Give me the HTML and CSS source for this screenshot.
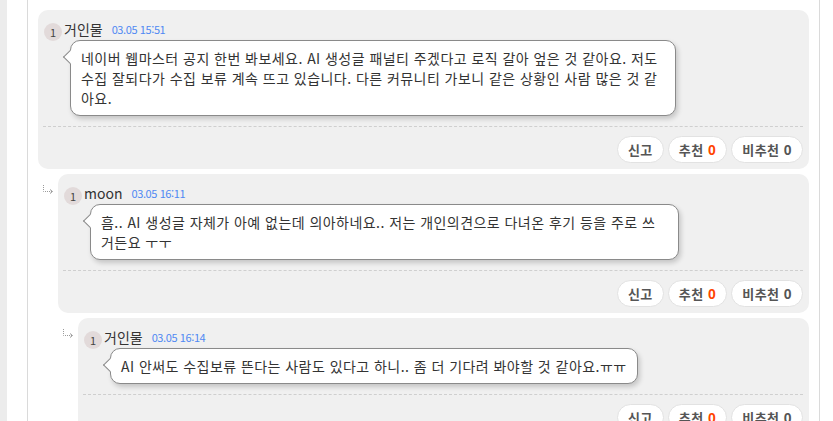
FILE: index.html
```html
<!DOCTYPE html>
<html lang="ko">
<head>
<meta charset="utf-8">
<title>댓글</title>
<link rel="stylesheet" href="styles.css">
</head>
<body>
<div class="page">
  <div class="side"></div>
  <div class="panel">
    <div class="thread">
      <div class="row">
        <div class="card">
          <div class="head"><span class="badge">1</span><span class="name">거인물</span><span class="date">03.05 15:51</span></div>
          <div class="body"><div class="bubble">네이버 웹마스터 공지 한번 봐보세요. AI 생성글 패널티 주겠다고 로직 갈아 엎은 것 같아요. 저도 수집 잘되다가 수집 보류 계속 뜨고 있습니다. 다른 커뮤니티 가보니 같은 상황인 사람 많은 것 같아요.</div></div>
          <div class="divider"></div>
          <div class="actions"><span class="btn">신고</span><span class="btn">추천 <b class="up">0</b></span><span class="btn">비추천 <b class="down">0</b></span></div>
        </div>
      </div>
      <div class="row depth-1">
        <div class="reply-icon"><svg width="12" height="9" viewBox="0 0 12 9"><path d="M1.5 0 V6.5 H10" fill="none" stroke="#9a9a9a" stroke-width="1" stroke-dasharray="1 1"/><path d="M8 4.5 L10.5 6.5 L8 8.5" fill="none" stroke="#9a9a9a" stroke-width="1"/></svg></div>
        <div class="card">
          <div class="head"><span class="badge">1</span><span class="name">moon</span><span class="date">03.05 16:11</span></div>
          <div class="body"><div class="bubble">흠.. AI 생성글 자체가 아예 없는데 의아하네요.. 저는 개인의견으로 다녀온 후기 등을 주로 쓰거든요 ㅜㅜ</div></div>
          <div class="divider"></div>
          <div class="actions"><span class="btn">신고</span><span class="btn">추천 <b class="up">0</b></span><span class="btn">비추천 <b class="down">0</b></span></div>
        </div>
      </div>
      <div class="row depth-2">
        <div class="reply-icon"><svg width="12" height="9" viewBox="0 0 12 9"><path d="M1.5 0 V6.5 H10" fill="none" stroke="#9a9a9a" stroke-width="1" stroke-dasharray="1 1"/><path d="M8 4.5 L10.5 6.5 L8 8.5" fill="none" stroke="#9a9a9a" stroke-width="1"/></svg></div>
        <div class="card">
          <div class="head"><span class="badge">1</span><span class="name">거인물</span><span class="date">03.05 16:14</span></div>
          <div class="body"><div class="bubble">AI 안써도 수집보류 뜬다는 사람도 있다고 하니.. 좀 더 기다려 봐야할 것 같아요.ㅠㅠ</div></div>
          <div class="divider"></div>
          <div class="actions"><span class="btn">신고</span><span class="btn">추천 <b class="up">0</b></span><span class="btn">비추천 <b class="down">0</b></span></div>
        </div>
      </div>
    </div>
  </div>
</div>
</body>
</html>
```
FILE: styles.css
```css
html, body {
  margin: 0;
  padding: 0;
  background: #ffffff;
  height: 100%;
  overflow: hidden;
}
body {
  font-family: "Noto Sans CJK KR", "Noto Sans", sans-serif;
  color: #333333;
}
.page {
  display: flex;
  height: 100%;
}
.side {
  width: 7px;
  flex: none;
  background: #ececec;
}
.panel {
  margin-left: 20px;
  width: 771px;
  flex: none;
  border-left: 1px solid #dadada;
  border-right: 1px solid #dadada;
  padding: 10px 10px 0 10px;
}
.thread {
  display: flex;
  flex-direction: column;
  gap: 5px;
}
.row {
  display: flex;
}
.row.depth-2 {
  padding-left: 20px;
}
.reply-icon {
  width: 20px;
  flex: none;
  padding: 11px 0 0 4px;
  box-sizing: border-box;
  line-height: 0;
}
.card {
  flex: 1;
  min-width: 0;
  background: #f0f0f0;
  border-radius: 10px;
  padding: 12px 6px 6px 5px;
}
.head {
  display: flex;
  align-items: center;
  height: 18px;
  padding-left: 1px;
}
.badge {
  width: 18px;
  height: 18px;
  border-radius: 50%;
  background: #e2dada;
  color: #444;
  font-size: 11px;
  line-height: 18px;
  text-align: center;
  margin-right: 2px;
  position: relative;
  top: 1px;
}
.name {
  font-size: 14px;
  color: #333;
  line-height: 18px;
  position: relative;
  top: -2px;
}
.date {
  font-size: 11px;
  color: #4f89f3;
  margin-left: 9px;
  letter-spacing: -0.4px;
  position: relative;
  top: -2px;
}
.body {
  padding: 0 20px 0 27px;
}
.bubble {
  position: relative;
  display: inline-block;
  box-sizing: border-box;
  max-width: 85%;
  background: #fff;
  border: 1px solid #8a8a8a;
  border-radius: 10px;
  padding: 7px 10px;
  font-size: 14px;
  letter-spacing: 0.45px;
  line-height: 20px;
  color: #333;
  box-shadow: 2px 3px 5px rgba(0, 0, 0, 0.18);
}
.bubble::before {
  content: "";
  position: absolute;
  left: -6px;
  top: 11px;
  width: 9px;
  height: 9px;
  background: #fff;
  border-left: 1px solid #8a8a8a;
  border-bottom: 1px solid #8a8a8a;
  transform: rotate(45deg);
}
.divider {
  margin-top: 10px;
  border-top: 1px dashed #cfcfcf;
}
.actions {
  display: flex;
  justify-content: flex-end;
  gap: 4px;
  margin-top: 9px;
}
.btn {
  display: inline-flex;
  align-items: center;
  height: 27px;
  box-sizing: border-box;
  padding: 0 10px;
  background: #fff;
  border: 1px solid #e2e2e2;
  border-radius: 14px;
  font-size: 13px;
  letter-spacing: 0.5px;
  font-weight: bold;
  color: #555;
  white-space: pre;
}
.btn b {
  font-family: "Liberation Sans", Arial, sans-serif;
  font-size: 14px;
}
.up {
  color: #ff4400;
}
.down {
  color: #555;
}
```
